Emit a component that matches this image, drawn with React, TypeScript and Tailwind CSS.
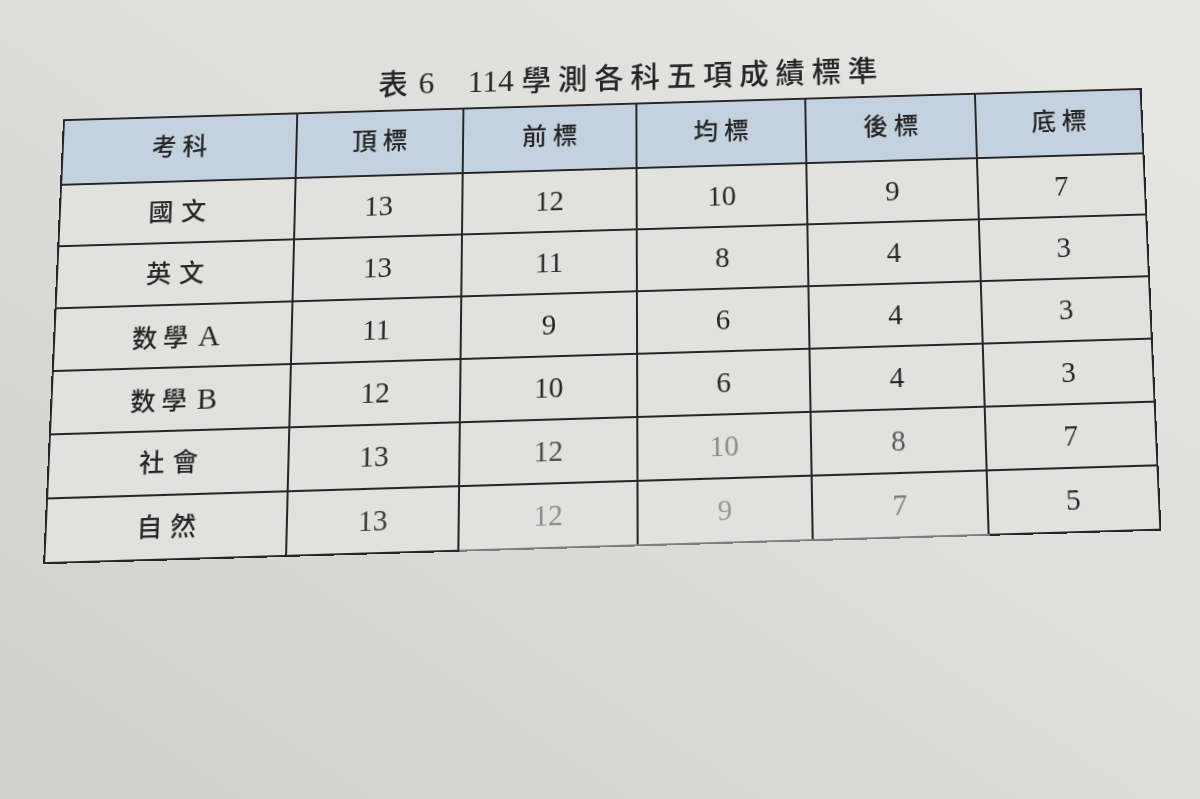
const headers = ['考科', '頂標', '前標', '均標', '後標', '底標'];

const rows: { name: string; suffix?: string; values: number[]; tones?: string[] }[] = [
  { name: '國文', values: [13, 12, 10, 9, 7] },
  { name: '英文', values: [13, 11, 8, 4, 3] },
  { name: '数學', suffix: 'A', values: [11, 9, 6, 4, 3] },
  { name: '数學', suffix: 'B', values: [12, 10, 6, 4, 3] },
  {
    name: '社會',
    values: [13, 12, 10, 8, 7],
    tones: ['text-[#2b2b2b]', 'text-[#4a4a4a]', 'text-[#8a8a8a]', 'text-[#5a5a5a]', 'text-[#2b2b2b]'],
  },
  {
    name: '自然',
    values: [13, 12, 9, 7, 5],
    tones: ['text-[#3a3a3a]', 'text-[#8c8c8c]', 'text-[#9a9a9a]', 'text-[#7a7a7a]', 'text-[#2b2b2b]'],
  },
];

const colWidths = ['w-[237px]', 'w-[169px]', 'w-[176px]', 'w-[172px]', 'w-[173px]', 'w-[169px]'];

export default function App() {
  return (
    <div className="w-[1200px] h-[799px] overflow-hidden bg-linear-to-tr from-[#cfd0cc] via-[#dddedb] to-[#e6e7e4] font-['Liberation_Serif','Noto_Sans_CJK_TC',serif] text-[#262626]">
      <div className="pl-[54px] pt-[53px]">
        <div className="w-[1096px] origin-[548px_268px] [transform:perspective(1500px)_rotateX(7deg)_skewY(-1.7deg)]">
          {/* caption */}
          <div className="h-[36px] mb-[9px] pl-[60px] text-center text-[30px] leading-[36px] font-medium">
            <span className="tracking-[7px]">表</span>
            <span className="ml-[4px] text-[32px]">6</span>
            <span className="ml-[34px] text-[32px]">114</span>
            <span className="ml-[8px] tracking-[7px]">學測各科五項成績標準</span>
          </div>

          <table className="w-[1096px] border-collapse table-fixed border-2 border-[#262626]">
            <colgroup>
              {colWidths.map((w, i) => (
                <col key={i} className={w} />
              ))}
            </colgroup>
            <thead>
              <tr className="h-[67px] bg-[#c4d1df]">
                {headers.map((h) => (
                  <th
                    key={h}
                    className="border-2 border-[#262626] pl-[6px] pb-[4px] text-[25px] font-medium tracking-[6px] text-[#262626]"
                  >
                    {h}
                  </th>
                ))}
              </tr>
            </thead>
            <tbody className="bg-[#e1e1df]">
              {rows.map((row, r) => {
                const last = r === rows.length - 1;
                return (
                  <tr key={row.name + (row.suffix ?? '')} className="h-[63px]">
                    <td className="border-2 border-[#262626] text-center text-[25px] font-medium">
                      <span className={row.suffix ? 'pl-[6px] tracking-[6px]' : 'pl-[8px] tracking-[8px]'}>
                        {row.name}
                      </span>
                      {row.suffix && <span className="ml-[4px] text-[30px] font-normal">{row.suffix}</span>}
                    </td>
                    {row.values.map((v, i) => (
                      <td
                        key={i}
                        className={
                          'border-2 border-[#262626] text-center text-[29px] ' +
                          (row.tones ? row.tones[i] : 'text-[#262626]') +
                          (last && i > 0 && i < 4 ? ' border-b-[#7d7d7d]' : '')
                        }
                      >
                        {v}
                      </td>
                    ))}
                  </tr>
                );
              })}
            </tbody>
          </table>
        </div>
      </div>
    </div>
  );
}
